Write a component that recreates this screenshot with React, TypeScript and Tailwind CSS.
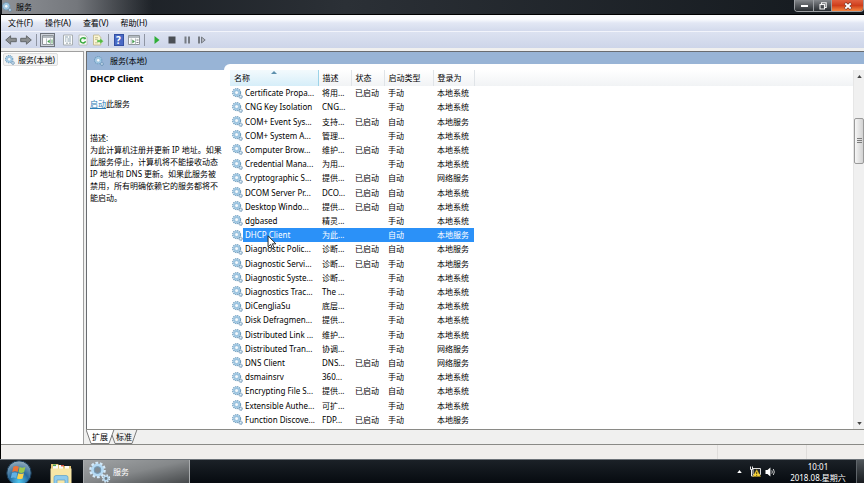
import { useState } from "react";

type Service = [name: string, description: string, status: string, startup: string, account: string];

const services: Service[] = [
  ["Certificate Propa...", "将用...", "已启动", "手动", "本地系统"],
  ["CNG Key Isolation", "CNG...", "", "手动", "本地系统"],
  ["COM+ Event Sys...", "支持...", "已启动", "自动", "本地服务"],
  ["COM+ System A...", "管理...", "", "手动", "本地系统"],
  ["Computer Brow...", "维护...", "已启动", "手动", "本地系统"],
  ["Credential Mana...", "为用...", "", "手动", "本地系统"],
  ["Cryptographic S...", "提供...", "已启动", "自动", "网络服务"],
  ["DCOM Server Pr...", "DCO...", "已启动", "自动", "本地系统"],
  ["Desktop Windo...", "提供...", "已启动", "自动", "本地系统"],
  ["dgbased", "精灵...", "", "手动", "本地系统"],
  ["DHCP Client", "为此...", "", "自动", "本地服务"],
  ["Diagnostic Polic...", "诊断...", "已启动", "自动", "本地服务"],
  ["Diagnostic Servi...", "诊断...", "已启动", "手动", "本地服务"],
  ["Diagnostic Syste...", "诊断...", "", "手动", "本地系统"],
  ["Diagnostics Trac...", "The ...", "", "手动", "本地系统"],
  ["DiCengJiaSu", "底层...", "", "手动", "本地系统"],
  ["Disk Defragmen...", "提供...", "", "手动", "本地系统"],
  ["Distributed Link ...", "维护...", "", "手动", "本地系统"],
  ["Distributed Tran...", "协调...", "", "手动", "网络服务"],
  ["DNS Client", "DNS...", "已启动", "自动", "网络服务"],
  ["dsmainsrv", "360...", "", "手动", "本地系统"],
  ["Encrypting File S...", "提供...", "已启动", "自动", "本地系统"],
  ["Extensible Authe...", "可扩...", "", "手动", "本地系统"],
  ["Function Discove...", "FDP...", "已启动", "手动", "本地服务"],
];

const Gears = ({ className = "" }: { className?: string }) => (
  <svg viewBox="0 0 20 20" className={className} fill="none" aria-hidden="true">
    <circle cx="8.4" cy="8.4" r="6.9" stroke="#6f9dbe" strokeWidth="2.8" strokeDasharray="2.4 1.21" />
    <circle cx="8.4" cy="8.4" r="5" fill="#f4fafd" stroke="#9fc8e4" strokeWidth="2.8" />
    <circle cx="8.4" cy="8.4" r="3.4" stroke="#6b9bc0" strokeWidth=".7" />
    <circle cx="15.8" cy="15.8" r="3.2" stroke="#5e86a8" strokeWidth="1.8" strokeDasharray="1.5 1" />
    <circle cx="15.8" cy="15.8" r="2.1" fill="#eff8fd" stroke="#7ba5c6" strokeWidth="1.4" />
  </svg>
);

// Lighter variant used on the dark taskbar
const TaskGears = () => (
  <svg viewBox="0 0 22 22" className="size-[22px]" fill="none" aria-hidden="true">
    <circle cx="8.5" cy="9" r="6.8" stroke="#d4eafa" strokeWidth="3" strokeDasharray="2.6 1.67" />
    <circle cx="8.5" cy="9" r="5" stroke="#b5daf4" strokeWidth="2.8" />
    <circle cx="8.5" cy="9" r="3.4" fill="#7f8b94" stroke="#6fa3cb" strokeWidth=".7" />
    <circle cx="17" cy="17.5" r="3.3" stroke="#d8ecfa" strokeWidth="1.8" strokeDasharray="1.5 1.1" />
    <circle cx="17" cy="17.5" r="2.2" fill="#6f7a82" stroke="#b9daf2" strokeWidth="1.5" />
  </svg>
);

const Arrow = ({ flip = false }: { flip?: boolean }) => (
  <svg viewBox="0 0 12 10" className={flip ? "h-[10px] w-3 -scale-x-100" : "h-[10px] w-3"}>
    <path d="M.7 5 5.6.8v2.5h5.7v3.4H5.6v2.5Z" fill="#8b8e90" stroke="#5e6265" strokeWidth=".9" />
  </svg>
);

const TreePaneIcon = () => (
  <svg viewBox="0 0 12 10" className="h-[10px] w-3">
    <path d="M.5.5h11v9H.5Z" fill="#fbfcfc" stroke="#8f959a" />
    <path d="M1 1h10v2H1Z" fill="#b3bac0" />
    <path d="M4.5 3.5v6M8.5 3.5v6" stroke="#a5abb0" strokeWidth=".8" />
    <path d="M7.7 4.6 5.3 6.4l2.4 1.8Z" fill="#3f9a49" />
    <path d="M10 4.5v4" stroke="#5aa862" />
  </svg>
);

const ActionPaneIcon = () => (
  <svg viewBox="0 0 12 10" className="h-[10px] w-3">
    <path d="M.5.5h11v9H.5Z" fill="#fbfcfc" stroke="#8f959a" />
    <path d="M1 1h10v2H1Z" fill="#b3bac0" />
    <path d="M3.2 3.5v6M7.5 3.5v6" stroke="#a5abb0" strokeWidth=".8" />
    <path d="m4.3 4.4 2.6 2-2.6 2Z" fill="#3f9a49" />
    <path d="M8.5 5h2M8.5 7.5h2" stroke="#7d858b" />
  </svg>
);

const PropertiesIcon = () => (
  <svg viewBox="0 0 12 12" className="size-3">
    <path d="M1.5 1h9v10h-9Z" fill="#fafcfc" stroke="#a7adb0" />
    <path d="M3 3h3M7 3h2M3 5h1.4M5.4 5H9M3 7h1.4M5.4 7H9" stroke="#849bab" strokeWidth=".9" />
    <path d="M4 9.2h2M7 9.2h2" stroke="#9aa5aa" />
  </svg>
);

const RefreshIcon = () => (
  <svg viewBox="0 0 12 12" className="size-3">
    <path d="M2 1h6l2 2v8H2Z" fill="#fafcfa" stroke="#b2b9b2" strokeWidth=".8" />
    <path d="M8.5 7.2a2.6 2.6 0 1 1-1-3" fill="none" stroke="#35a83b" strokeWidth="1.4" />
    <path d="M6.5 5.6 9.2 5 8 2.6Z" fill="#35a83b" />
  </svg>
);

const ExportIcon = () => (
  <svg viewBox="0 0 12 12" className="size-3">
    <path d="M1.5 1h5l2.3 2.2V11H1.5Z" fill="#fcf6d2" stroke="#bdb284" strokeWidth=".8" />
    <path d="M3 3.7h3M3 5.4h3M3 8.8h3" stroke="#aba77f" strokeWidth=".7" />
    <path d="M5 6h3V4l3.5 3.2L8 10.2v-2H5Z" fill="#55bb41" stroke="#dff0d5" strokeWidth=".4" />
  </svg>
);

const HelpIcon = () => (
  <span className="grid h-3 w-[10px] place-items-center border border-[#3350a4] bg-[#4a69c4] text-[10px] leading-none font-bold text-white">?</span>
);

const Separator = () => <span className="h-3 w-px bg-[#8f95a3]" />;

const toolButton = "grid h-[14px] w-[15px] place-items-center";

const TitleBar = () => (
  <header className="flex h-[15px] shrink-0 items-start justify-between border-b border-black bg-linear-to-r from-[#15191e] via-[#2b3036] via-40% to-[#14191e] pl-[2px] text-black">
    <div className="flex h-[14px] w-[150px] items-center gap-1 bg-linear-to-r from-[#8e9196] via-[#74777c] to-transparent">
      <Gears className="size-[10px]" />
      <h1>服务</h1>
    </div>
    <div className="flex h-3 overflow-hidden rounded-b-sm border border-t-0 border-[#9c9fa3]">
      <button aria-label="最小化" className="grid w-[19px] place-items-center border-r border-[#9c9fa3] bg-linear-to-b from-[#85888c] to-[#292d31]">
        <span className="h-[2px] w-[7px] bg-white" />
      </button>
      <button aria-label="还原" className="grid w-[18px] place-items-center border-r border-[#9c9fa3] bg-linear-to-b from-[#85888c] to-[#292d31]">
        <svg viewBox="0 0 8 8" className="size-2" fill="none" stroke="#f4f4f4">
          <path d="M2.5 2V.8h4.7v4.7H6M1 2.5h4.5V7H1Z" strokeWidth="1.1" />
        </svg>
      </button>
      <button aria-label="关闭" className="grid w-[31px] place-items-center bg-linear-to-b from-[#e0603f] via-[#cf3d19] to-[#f5853f]">
        <svg viewBox="0 0 8 8" className="size-2">
          <path d="m1 1.2 6 5.6M7 1.2 1 6.8" stroke="#6d372b" strokeWidth="3" />
          <path d="m1.3 1.5 5.4 5M6.7 1.5l-5.4 5" stroke="#fff" strokeWidth="1.8" />
        </svg>
      </button>
    </div>
  </header>
);

const MenuBar = () => (
  <nav className="flex h-4 shrink-0 items-center gap-3 bg-linear-to-b from-[#fbfcfe] from-25% via-[#e2e7f4] via-50% to-[#d3daec] pl-[7px]">
    {["文件(F)", "操作(A)", "查看(V)", "帮助(H)"].map((item) => (
      <button key={item}>{item}</button>
    ))}
  </nav>
);

const Toolbar = () => (
  <div className="flex h-[17px] shrink-0 items-center border-t border-[#f2f4fb] bg-linear-to-b from-[#dce2f1] to-[#cdd5e9] pl-[2px]">
    <button aria-label="后退" className={toolButton}><Arrow /></button>
    <button aria-label="前进" className={toolButton}><Arrow flip /></button>
    <span className="w-[3px]" />
    <Separator />
    <button aria-label="显示/隐藏控制台树" className="ml-[3px] grid h-[14px] w-[15px] place-items-center border border-[#6e747c] bg-[#cfd4dc]"><TreePaneIcon /></button>
    <span className="w-[5px]" />
    <button aria-label="属性" className={toolButton}><PropertiesIcon /></button>
    <button aria-label="刷新" className={toolButton}><RefreshIcon /></button>
    <button aria-label="导出列表" className={toolButton}><ExportIcon /></button>
    <span className="w-[3px]" />
    <Separator />
    <button aria-label="帮助" className={"ml-[2px] " + toolButton}><HelpIcon /></button>
    <button aria-label="显示/隐藏操作窗格" className={toolButton}><ActionPaneIcon /></button>
    <span className="w-[3px]" />
    <Separator />
    <button aria-label="启动服务" className={"ml-1 " + toolButton}>
      <svg viewBox="0 0 8 8" className="size-2"><path d="m1.5 0 5 4-5 4Z" fill="#2fae37" /></svg>
    </button>
    <button aria-label="停止服务" className={toolButton}>
      <svg viewBox="0 0 8 8" className="size-2"><path d="M.5.5h7v7h-7Z" fill="#4b4f55" /></svg>
    </button>
    <button aria-label="暂停服务" className={toolButton}>
      <svg viewBox="0 0 8 8" className="size-2"><path d="M1.5.5h2v7h-2ZM5 .5h2v7H5Z" fill="#777c84" /></svg>
    </button>
    <button aria-label="重新启动服务" className={toolButton}>
      <svg viewBox="0 0 8 8" className="size-2"><path d="M0 .5h2v7H0Z" fill="#777c84" /><path d="M3.5 1 7.2 4 3.5 7Z" fill="#b5bac2" stroke="#777c84" /></svg>
    </button>
  </div>
);

const Details = () => (
  <section className="w-[137px] shrink-0 pl-[3px] leading-3">
    <h2 className="mt-[3px] text-[9px] font-bold">DHCP Client</h2>
    <p className="mt-[13px]">
      <a href="#start" className="text-[#2d7db5] underline">启动</a>此服务
    </p>
    <p className="mt-[22px]">描述:</p>
    <p className="w-[133px]">
      为此计算机注册并更新 IP 地址。如果此服务停止，计算机将不能接收动态 IP 地址和 DNS 更新。如果此服务被禁用，所有明确依赖它的服务都将不能启动。
    </p>
  </section>
);

const headCell = "relative border-r border-[#e0e4e8] p-0 pl-1 text-left font-normal";

const ServiceTable = () => {
  const [selected, setSelected] = useState("DHCP Client");

  return (
    <table className="h-full w-full table-fixed border-collapse whitespace-nowrap">
      <colgroup>
        <col className="w-[13px]" />
        <col className="w-[75px]" />
        <col className="w-[33px]" />
        <col className="w-[33px]" />
        <col className="w-[49px]" />
        <col className="w-[41px]" />
        <col />
      </colgroup>
      <thead>
        <tr className="h-4 bg-linear-to-b from-white to-[#f1f3f5]">
          <th colSpan={2} className="relative border-r border-[#9cd3e8] bg-linear-to-b from-[#f3fafd] to-[#d6eef9] p-0 pl-1 text-left font-normal">
            名称
            <svg viewBox="0 0 6 3" className="absolute top-px left-[41px] h-[3px] w-[6px]"><path d="m0 3 3-3 3 3Z" fill="#5c90ad" /></svg>
          </th>
          <th className={headCell}>描述</th>
          <th className={headCell}>状态</th>
          <th className={headCell}>启动类型</th>
          <th className={headCell}>登录为</th>
          <th className="p-0" />
        </tr>
      </thead>
      <tbody>
        {services.map(([name, description, status, startup, account]) => {
          const cell = name === selected ? "bg-[#2b91f8] p-0 pl-1 text-white" : "p-0 pl-1";
          return (
            <tr key={name} onClick={() => setSelected(name)}>
              <td className="p-0 pl-[2px]"><Gears className="size-[11px]" /></td>
              <td className={name === selected ? "bg-[#2b91f8] p-0 pl-[2px] text-white" : "p-0 pl-[2px]"}>{name}</td>
              <td className={cell}>{description}</td>
              <td className={cell}>{status}</td>
              <td className={cell}>{startup}</td>
              <td className={cell}>{account}</td>
              <td className="p-0" />
            </tr>
          );
        })}
      </tbody>
    </table>
  );
};

const ScrollBar = () => (
  <div className="flex w-[11px] shrink-0 flex-col items-center border-l border-[#e6e6e6] bg-[#f0f0f0]">
    <button aria-label="向上滚动" className="grid h-3 w-full place-items-center">
      <svg viewBox="0 0 6 4" className="h-[3px] w-[5px]"><path d="m0 4 3-4 3 4Z" fill="#444" /></svg>
    </button>
    <div className="w-full grow-[2]" />
    <div className="grid h-[46px] w-full place-items-center rounded-xs border border-[#9a9a9a] bg-linear-to-r from-[#f6f6f6] to-[#d2d2d2]">
      <svg viewBox="0 0 5 6" className="h-[6px] w-[5px]"><path d="M0 .5h5M0 2.5h5M0 4.5h5" stroke="#7c7c7c" /></svg>
    </div>
    <div className="w-full grow-[14]" />
    <button aria-label="向下滚动" className="grid h-3 w-full place-items-center">
      <svg viewBox="0 0 6 4" className="h-[3px] w-[5px]"><path d="m0 0 3 4 3-4Z" fill="#444" /></svg>
    </button>
  </div>
);

const ViewTabs = () => (
  <div className="relative flex h-[15px] shrink-0 items-center gap-2 border-t border-[#8a8a86] bg-[#f0f0ef] pl-[6px]">
    <svg viewBox="0 0 54 14" className="absolute top-0 left-0 h-[14px] w-[54px]" fill="none" stroke="#7b7b7b">
      <path d="M0-.5 5 13.5h18L28-.5Z" fill="#fff" stroke="none" />
      <path d="M0-.5 5 13.5h18L28-.5M26 5l3 8.5h17l5-14" />
    </svg>
    <button className="relative">扩展</button>
    <button className="relative">标准</button>
  </div>
);

const Taskbar = () => (
  <footer className="flex h-6 shrink-0 items-stretch overflow-hidden border-t border-[#6c7278] bg-linear-to-b from-[#1b2127] to-[#070b10] text-white">
    <button aria-label="开始" className="ml-[6px] w-[26px]">
      <svg viewBox="0 0 26 24" className="h-6 w-[26px]">
        <defs>
          <radialGradient id="orb" cx=".5" cy=".85" r=".8">
            <stop offset="0" stopColor="#4fc7ee" />
            <stop offset=".5" stopColor="#286a9e" />
            <stop offset="1" stopColor="#8ea8b9" />
          </radialGradient>
        </defs>
        <circle cx="13" cy="13" r="12.2" fill="url(#orb)" stroke="#173a56" />
        <path d="M7.4 6.7c2-1 3.6-.9 5.4 0l-1.2 5.2c-1.8-.8-3.4-.8-5.4 0Z" fill="#ed7337" />
        <path d="M13.6 7.1c2 .9 3.6.9 5.8 0l-1.3 5.2c-2 .8-3.6.8-5.7 0Z" fill="#9cc94d" />
        <path d="M6 12.8c1.9-.8 3.5-.8 5.4 0l-1.2 5.2c-1.8-.8-3.4-.8-5.4 0Z" fill="#62b0e3" />
        <path d="M12.2 13.2c1.9.8 3.5.8 5.7 0l-1.3 5.2c-2 .9-3.6.9-5.6 0Z" fill="#fbd14b" />
      </svg>
    </button>
    <button aria-label="资源管理器" className="ml-[17px] w-6">
      <svg viewBox="0 0 24 24" className="size-6">
        <path d="M2 4h7l1.5 2H22v18H2Z" fill="#e7c978" />
        <path d="M4 5h5v4H4ZM10 5h4v4h-4ZM16 6h4v3h-4Z" fill="#fafafa" />
        <path d="M4 4.5h3v1.6H4Z" fill="#47a45a" /><path d="M12 5h3v1.4h-3Z" fill="#d55242" />
        <path d="M1.5 8.5h21V24h-21Z" fill="#f8e6a6" />
        <path d="M5 24v-6.5q0-2 2-2h10q2 0 2 2V24h-3v-4H8v4Z" fill="#8fcbed" stroke="#5a9fc9" strokeWidth=".7" />
      </svg>
    </button>
    <button className="ml-[10px] flex w-[107px] items-center gap-[2px] border-x border-[#a9acae] bg-linear-to-br from-[#a0a3a5] via-[#85888a] to-[#46494b] pl-[5px]">
      <TaskGears />
      服务
    </button>
    <div className="ml-auto flex items-center gap-1">
      <button aria-label="显示隐藏的图标" className="mr-1">
        <svg viewBox="0 0 6 4" className="h-[3px] w-[5px]"><path d="m0 4 3-4 3 4Z" fill="#fff" /></svg>
      </button>
      <svg viewBox="0 0 11 11" className="size-[11px]" aria-label="网络">
        <path d="M3 2.5h7.5v6H3Z" fill="#22272b" stroke="#ddd" />
        <path d="M.5.5v3h2v-3M1.5 3.5V10H4" fill="none" stroke="#eee" />
        <path d="m6.7 3.5 4 7H2.8Z" fill="#f8d438" stroke="#a7851c" strokeWidth=".4" />
        <path d="M6.7 5.8v2.4M6.7 9v.8" stroke="#3b3109" strokeWidth=".9" />
      </svg>
      <svg viewBox="0 0 11 10" className="h-[10px] w-[11px]" aria-label="音量">
        <path d="M.5 3h2L5.4.5v9L2.5 7h-2Z" fill="#fff" />
        <path d="M6.8 3.4q1.1 1.6 0 3.2M8.3 2q2.1 3 0 6" fill="none" stroke="#ddd" strokeWidth=".9" />
      </svg>
    </div>
    <time className="mt-px ml-1 w-[76px] shrink-0 text-center leading-[11px]">
      10:01<br />2018.08.星期六
    </time>
    <button aria-label="显示桌面" className="w-2 border-l border-[#5f656a] bg-linear-to-b from-[#50565b] to-[#181c20]" />
  </footer>
);

export default function App() {
  return (
    <div className="flex h-screen flex-col overflow-hidden bg-[#f0f0ef] font-['Noto_Sans','Noto_Sans_CJK_SC',sans-serif] text-[8px] leading-3 text-black select-none">
      <TitleBar />
      <div className="flex min-h-0 grow flex-col border-l border-black">
        <MenuBar />
        <Toolbar />
        <main className="flex min-h-0 grow gap-[2px] border-b border-[#8a8a86] pt-[3px]">
          <aside className="w-[83px] shrink-0 border-t border-r border-[#a0a0a0] bg-white pt-px pl-[2px]">
            <button className="flex h-[13px] items-center gap-[3px] rounded-xs border border-[#dedede] bg-[#f4f4f4] pr-[2px] pl-px">
              <Gears className="size-[10px]" />
              服务(本地)
            </button>
          </aside>
          <div className="flex min-w-0 grow flex-col">
            <div className="flex min-h-0 grow flex-col border-t border-l border-[#696c70] bg-white">
              <div className="flex h-[18px] shrink-0 items-end bg-[#98b4d6]">
                <div className="flex h-[18px] w-[137px] items-center gap-[6px] pl-[7px]">
                  <Gears className="size-[10px]" />
                  服务(本地)
                </div>
                <div className="h-[6px] grow rounded-tl-md bg-white" />
              </div>
              <div className="flex min-h-0 grow">
                <Details />
                <div className="ml-[6px] min-w-0 grow pb-[2px]">
                  <ServiceTable />
                </div>
                <ScrollBar />
              </div>
            </div>
            <ViewTabs />
          </div>
        </main>
        <div className="flex h-[14px] shrink-0 justify-end bg-[#f0eeec]">
          <span className="w-[89px] border-l border-[#dfdddb]" />
          <span className="w-[58px] border-l border-[#dfdddb]" />
        </div>
      </div>
      <Taskbar />
      <svg viewBox="0 0 12 19" className="pointer-events-none absolute top-[235px] left-[267px] h-[15px] w-[10px]">
        <path d="M1 1v14l3.3-3.1 2.2 5.6 2.3-1-2.3-5.3h4.4Z" fill="#fff" stroke="#222" strokeWidth="1.2" />
      </svg>
    </div>
  );
}
